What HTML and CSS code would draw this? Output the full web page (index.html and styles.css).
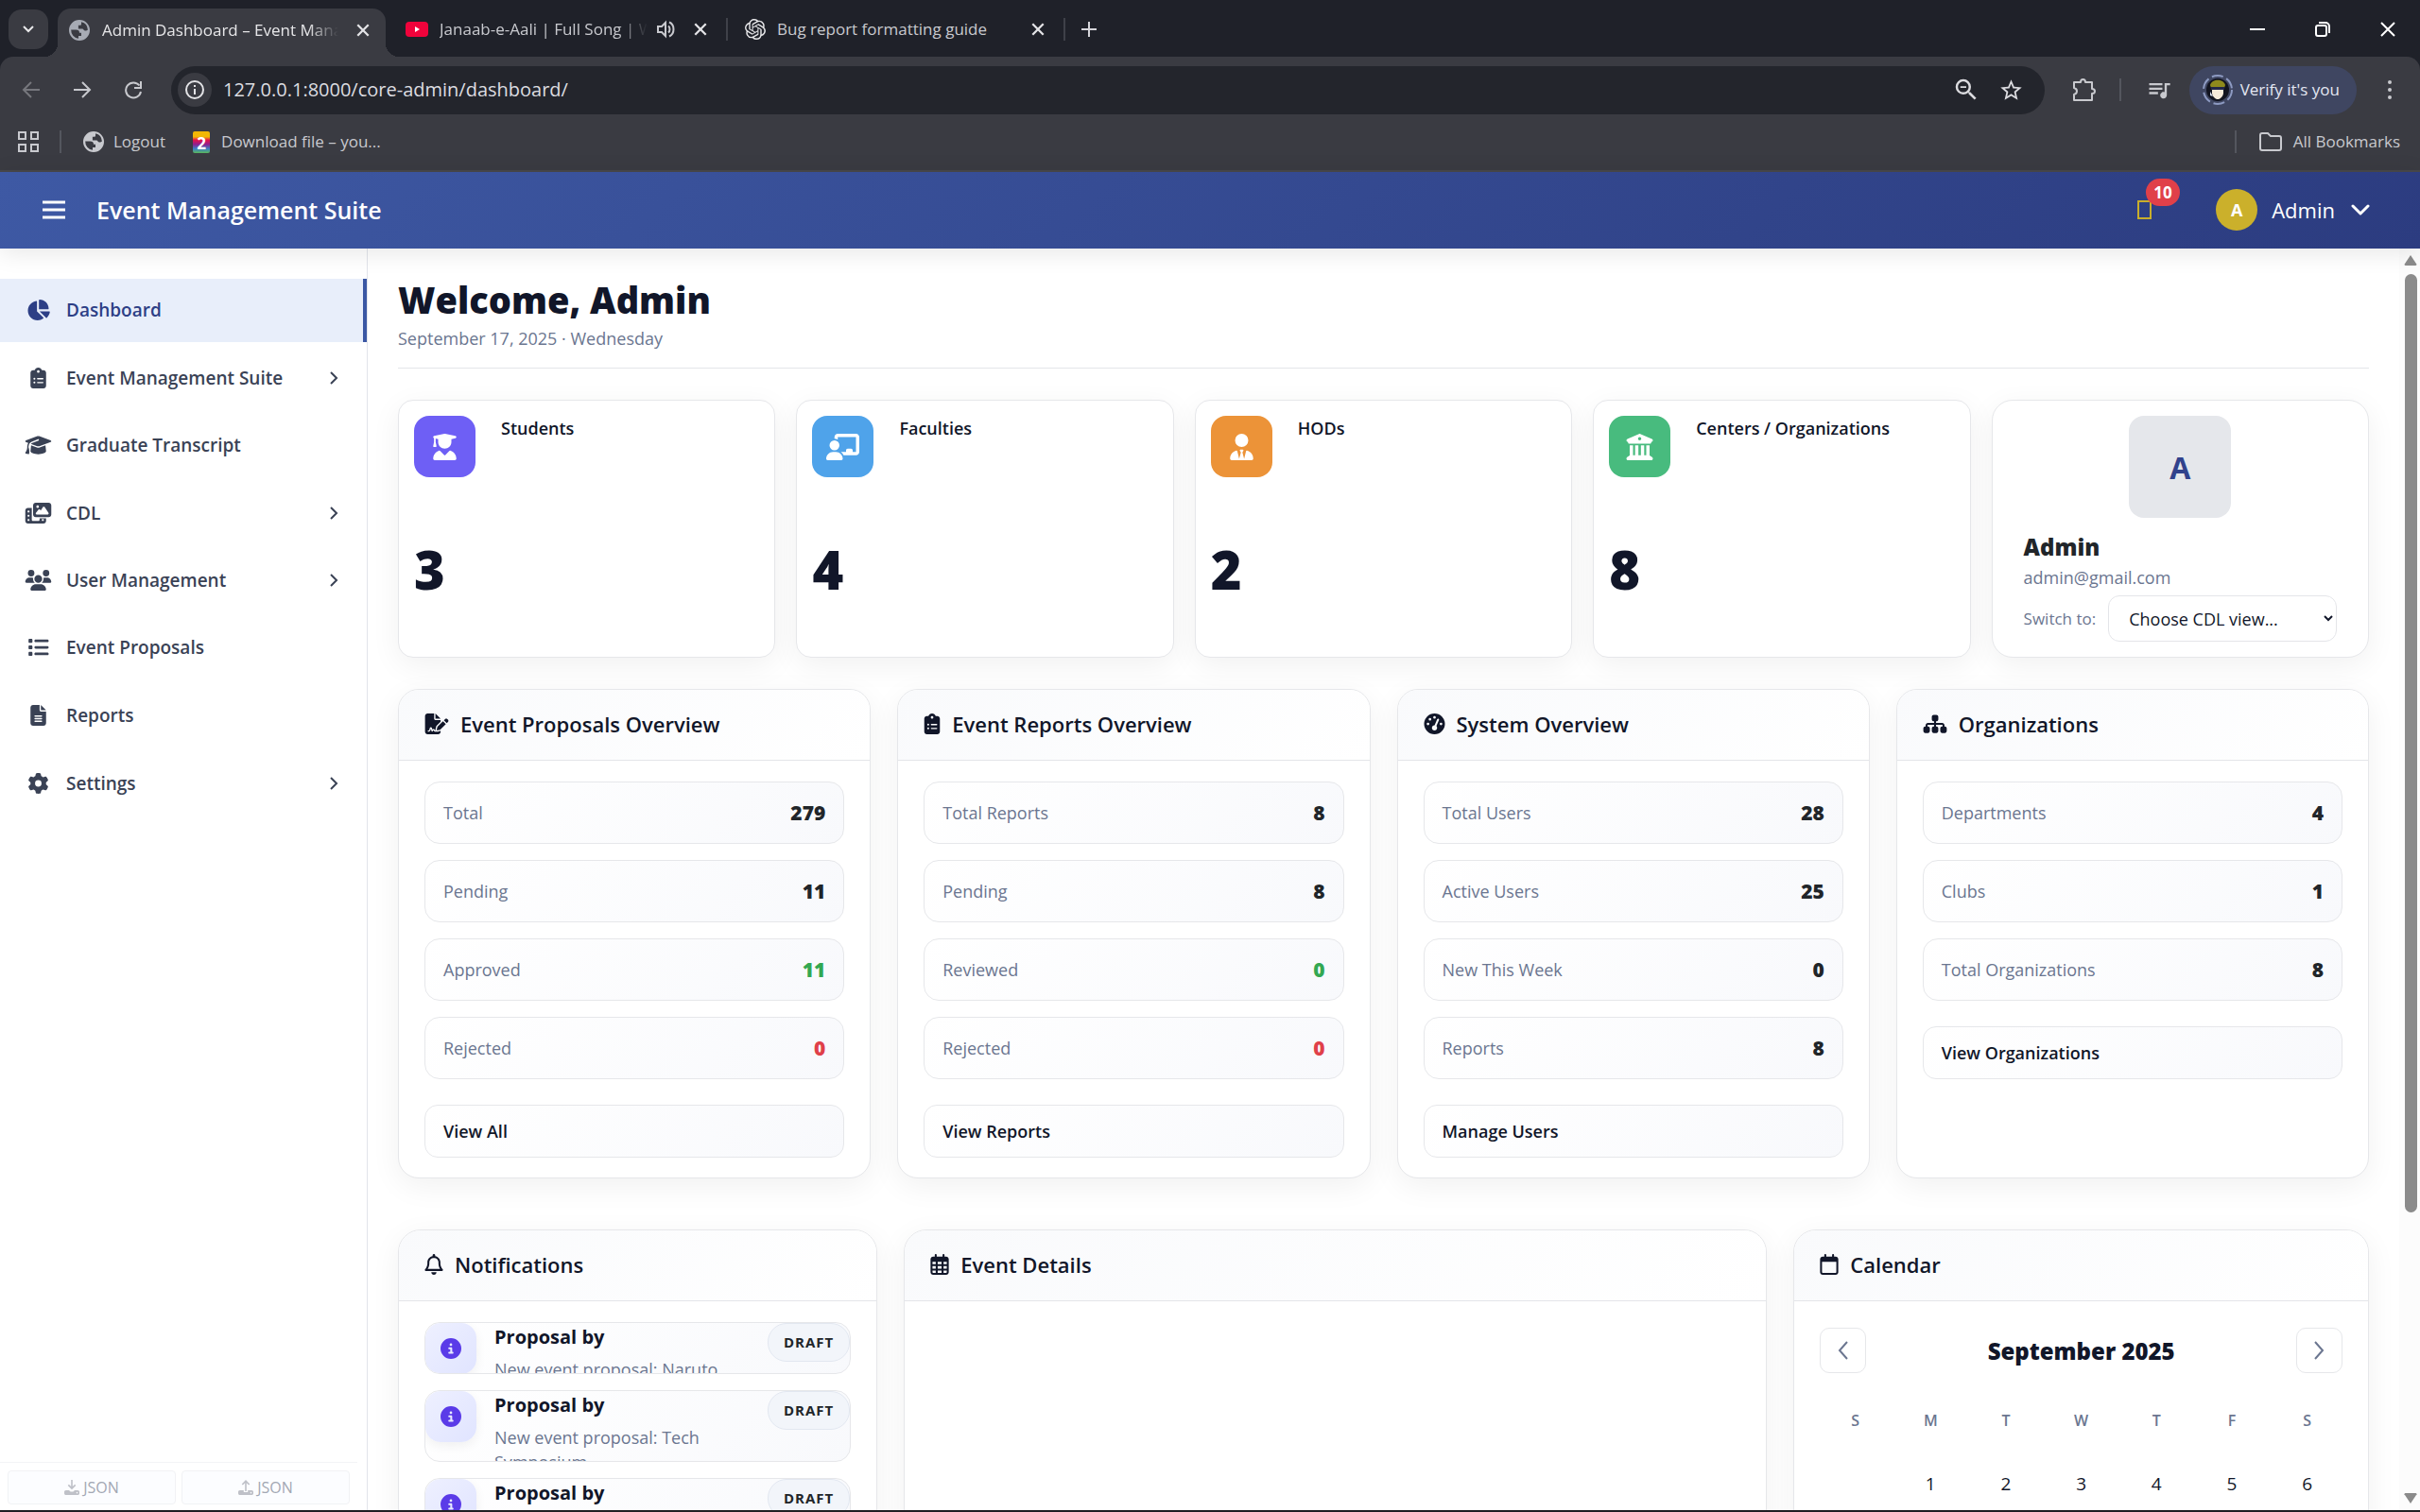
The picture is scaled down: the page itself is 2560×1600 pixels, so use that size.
FILE: index.html
```html
<!DOCTYPE html>
<html lang="en">
<head>
<meta charset="utf-8">
<title>Admin Dashboard – Event Management Suite</title>
<link rel="stylesheet" href="styles.css">
</head>
<body>
<svg class="sprite" aria-hidden="true">
  <symbol id="pie" viewBox="0 0 576 512"><path d="M304 240V16.600c0-9 7-16.600 16-16.600C443.700 0 544 100.300 544 224c0 9-7.600 16-16.600 16H304zM32 272C32 150.700 122.100 50.300 239 34.300c9.200-1.300 17 6.100 17 15.400V288L412.500 444.500c6.700 6.700 6.200 17.700-1.500 23.100C371.800 495.600 323.800 512 272 512C139.500 512 32 404.600 32 272zm526.400 16c9.300 0 16.600 7.800 15.400 17c-7.700 55.900-34.600 105.600-73.900 142.300c-6 5.600-15.400 5.200-21.200-.7L320 288H558.400z"/></symbol>
  <symbol id="clipboard" viewBox="0 0 384 512"><path d="M192 0c-41.800 0-77.400 26.700-90.500 64H64C28.700 64 0 92.700 0 128V448c0 35.300 28.700 64 64 64H320c35.300 0 64-28.700 64-64V128c0-35.300-28.700-64-64-64H282.500C269.400 26.700 233.800 0 192 0zm0 64a32 32 0 1 1 0 64 32 32 0 1 1 0-64zM72 272a24 24 0 1 1 48 0 24 24 0 1 1 -48 0zm104-16H304c8.800 0 16 7.200 16 16s-7.200 16-16 16H176c-8.800 0-16-7.200-16-16s7.200-16 16-16zM72 368a24 24 0 1 1 48 0 24 24 0 1 1 -48 0zm88 0c0-8.800 7.200-16 16-16H304c8.800 0 16 7.200 16 16s-7.200 16-16 16H176c-8.800 0-16-7.200-16-16z"/></symbol>
  <symbol id="gradcap" viewBox="0 0 640 512"><path d="M320 32c-8.100 0-16.100 1.400-23.700 4.100L15.800 137.400C6.300 140.900 0 149.900 0 160s6.300 19.100 15.800 22.600l57.900 20.900C57.300 229.300 48 259.800 48 291.900v28.100c0 28.400-10.800 57.700-22.300 80.800c-6.500 13-13.900 25.800-22.500 37.600C0 442.700-.9 448.300 .9 453.400s6 8.900 11.200 10.200l64 16c4.200 1.100 8.700 .3 12.400-2s6.300-6.100 7.100-10.400c8.600-42.800 4.300-81.200-2.100-108.700C90.300 344.300 86 329.800 80 316.500V291.900c0-30.200 10.200-58.700 27.900-81.500c12.900-15.500 29.600-28 49.200-35.700l157-61.700c8.200-3.200 17.500 .8 20.700 9s-.8 17.500-9 20.700l-157 61.700c-12.400 4.900-23.300 12.400-32.200 21.600l159.600 57.600c7.600 2.700 15.600 4.100 23.700 4.100s16.100-1.400 23.700-4.100L624.200 182.600c9.500-3.400 15.800-12.500 15.800-22.600s-6.300-19.100-15.800-22.600L343.700 36.100C336.100 33.400 328.100 32 320 32zM128 408c0 35.300 86 72 192 72s192-36.700 192-72L496.700 262.600 354.500 314c-11.100 4-22.800 6-34.500 6s-23.500-2-34.500-6L143.300 262.600 128 408z"/></symbol>
  <symbol id="film" viewBox="0 0 640 512"><path d="M256 0H576c35.300 0 64 28.700 64 64V288c0 35.300-28.700 64-64 64H256c-35.300 0-64-28.700-64-64V64c0-35.300 28.700-64 64-64zM476 106.700C471.500 100 464 96 456 96s-15.500 4-20 10.700l-56 84L362.700 169c-4.600-5.700-11.500-9-18.700-9s-14.200 3.300-18.700 9l-64 80c-5.800 7.200-6.900 17.100-2.900 25.400s12.400 13.600 21.600 13.600h80 48H552c8.900 0 17-4.900 21.200-12.700s3.700-17.300-1.200-24.600l-96-144zM336 96a32 32 0 1 0 -64 0 32 32 0 1 0 64 0zM64 128h96V384v32c0 17.700 14.300 32 32 32H320c17.700 0 32-14.300 32-32V384H512v64c0 35.300-28.700 64-64 64H64c-35.300 0-64-28.700-64-64V192c0-35.300 28.700-64 64-64zm8 64c-8.800 0-16 7.200-16 16v16c0 8.800 7.200 16 16 16H88c8.800 0 16-7.200 16-16V208c0-8.800-7.200-16-16-16H72zm0 104c-8.800 0-16 7.200-16 16v16c0 8.800 7.200 16 16 16H88c8.800 0 16-7.200 16-16V312c0-8.800-7.200-16-16-16H72zm0 104c-8.800 0-16 7.200-16 16v16c0 8.800 7.200 16 16 16H88c8.800 0 16-7.200 16-16V416c0-8.800-7.200-16-16-16H72zm336 16v16c0 8.800 7.200 16 16 16h16c8.800 0 16-7.200 16-16V416c0-8.800-7.200-16-16-16H424c-8.800 0-16 7.200-16 16z"/></symbol>
  <symbol id="users" viewBox="0 0 640 512"><path d="M144 0a80 80 0 1 1 0 160A80 80 0 1 1 144 0zM512 0a80 80 0 1 1 0 160A80 80 0 1 1 512 0zM0 298.700C0 239.800 47.800 192 106.700 192h42.700c15.900 0 31 3.500 44.600 9.700c-1.300 7.200-1.900 14.700-1.900 22.300c0 38.200 16.800 72.500 43.300 96c-.2 0-.4 0-.7 0H21.300C9.600 320 0 310.400 0 298.700zM405.300 320c-.2 0-.4 0-.7 0c26.600-23.500 43.300-57.800 43.300-96c0-7.600-.7-15-1.900-22.300c13.600-6.300 28.700-9.700 44.600-9.700h42.700C592.200 192 640 239.800 640 298.700c0 11.800-9.600 21.300-21.300 21.300H405.300zM224 224a96 96 0 1 1 192 0 96 96 0 1 1 -192 0zM128 485.300C128 411.700 187.700 352 261.300 352H378.700C452.300 352 512 411.700 512 485.300c0 14.700-11.900 26.700-26.700 26.700H154.700c-14.700 0-26.700-11.900-26.700-26.700z"/></symbol>
  <symbol id="list" viewBox="0 0 512 512"><path d="M40 48C26.700 48 16 58.700 16 72v48c0 13.300 10.700 24 24 24H88c13.300 0 24-10.700 24-24V72c0-13.300-10.700-24-24-24H40zM192 64c-17.700 0-32 14.300-32 32s14.300 32 32 32H480c17.700 0 32-14.300 32-32s-14.300-32-32-32H192zm0 160c-17.700 0-32 14.300-32 32s14.300 32 32 32H480c17.700 0 32-14.300 32-32s-14.300-32-32-32H192zm0 160c-17.700 0-32 14.300-32 32s14.300 32 32 32H480c17.700 0 32-14.300 32-32s-14.300-32-32-32H192zM16 232v48c0 13.300 10.700 24 24 24H88c13.300 0 24-10.700 24-24V232c0-13.300-10.700-24-24-24H40c-13.300 0-24 10.700-24 24zM40 368c-13.300 0-24 10.700-24 24v48c0 13.300 10.700 24 24 24H88c13.300 0 24-10.700 24-24V392c0-13.300-10.700-24-24-24H40z"/></symbol>
  <symbol id="file" viewBox="0 0 384 512"><path d="M64 0C28.700 0 0 28.700 0 64V448c0 35.300 28.700 64 64 64H320c35.300 0 64-28.700 64-64V160H256c-17.700 0-32-14.300-32-32V0H64zM256 0V128H384L256 0zM112 256H272c8.800 0 16 7.200 16 16s-7.200 16-16 16H112c-8.800 0-16-7.200-16-16s7.200-16 16-16zm0 64H272c8.800 0 16 7.200 16 16s-7.200 16-16 16H112c-8.800 0-16-7.200-16-16s7.200-16 16-16zm0 64H272c8.800 0 16 7.200 16 16s-7.200 16-16 16H112c-8.800 0-16-7.200-16-16s7.200-16 16-16z"/></symbol>
  <symbol id="gear" viewBox="0 0 512 512"><path d="M495.900 166.600c3.200 8.700 .5 18.400-6.400 24.600l-43.300 39.400c1.100 8.300 1.700 16.800 1.700 25.400s-.6 17.100-1.700 25.400l43.300 39.400c6.900 6.200 9.600 15.900 6.400 24.600c-4.400 11.900-9.700 23.300-15.800 34.300l-4.700 8.100c-6.600 11-14 21.400-22.100 31.200c-5.900 7.200-15.700 9.600-24.500 6.800l-55.700-17.700c-13.400 10.300-28.200 18.900-44 25.400l-12.500 57.100c-2 9.100-9 16.300-18.200 17.800c-13.800 2.300-28 3.500-42.500 3.500s-28.700-1.200-42.500-3.500c-9.200-1.500-16.200-8.700-18.200-17.800l-12.500-57.100c-15.800-6.500-30.600-15.100-44-25.400L83.100 425.900c-8.800 2.800-18.600 .3-24.500-6.800c-8.100-9.800-15.500-20.200-22.100-31.200l-4.700-8.100c-6.100-11-11.400-22.400-15.800-34.300c-3.200-8.700-.5-18.400 6.400-24.600l43.300-39.400C64.600 273.100 64 264.600 64 256s.6-17.100 1.700-25.400L22.400 191.200c-6.900-6.200-9.600-15.900-6.400-24.600c4.400-11.900 9.700-23.300 15.800-34.300l4.700-8.100c6.600-11 14-21.400 22.100-31.200c5.900-7.200 15.700-9.600 24.500-6.800l55.700 17.700c13.400-10.300 28.200-18.900 44-25.400l12.500-57.100c2-9.100 9-16.300 18.200-17.800C227.300 1.200 241.500 0 256 0s28.700 1.200 42.500 3.500c9.200 1.500 16.200 8.700 18.200 17.800l12.500 57.100c15.800 6.500 30.600 15.100 44 25.400l55.700-17.700c8.800-2.800 18.600-.3 24.500 6.800c8.100 9.800 15.500 20.200 22.100 31.200l4.700 8.100c6.100 11 11.400 22.400 15.800 34.300zM256 336a80 80 0 1 0 0-160 80 80 0 1 0 0 160z"/></symbol>
  <symbol id="student" viewBox="0 0 448 512"><path d="M219.300 .5c3.100-.6 6.300-.6 9.400 0l200 40C439.900 42.700 448 52.600 448 64s-8.100 21.300-19.300 23.500L352 102.900V160c0 70.700-57.300 128-128 128s-128-57.300-128-128V102.900L48 93.300v65.100l15.700 78.400c.9 4.700-.3 9.600-3.300 13.300s-7.600 5.900-12.400 5.900H16c-4.800 0-9.300-2.100-12.400-5.900s-4.300-8.600-3.300-13.300L16 158.400V86.600C6.500 83.300 0 74.300 0 64C0 52.600 8.100 42.700 19.300 40.500l200-40zM111.900 327.700c10.500-3.400 21.800 .4 29.400 8.500l71 75.500c6.300 6.700 17 6.700 23.300 0l71-75.500c7.600-8.100 18.900-11.900 29.400-8.500C401 348.600 448 409.400 448 481.300c0 17-13.800 30.700-30.700 30.700H30.700C13.800 512 0 498.200 0 481.300c0-71.900 47-132.700 111.900-153.600z"/></symbol>
  <symbol id="teacher" viewBox="0 0 640 512"><path d="M160 64c0-35.300 28.700-64 64-64H576c35.300 0 64 28.700 64 64V352c0 35.300-28.700 64-64 64H336.800c-11.800-25.500-29.900-47.500-52.400-64H384V320c0-17.700 14.300-32 32-32h64c17.700 0 32 14.300 32 32v32h64V64L224 64v49.100C205.200 102.200 183.300 96 160 96V64zm0 64a96 96 0 1 1 0 192 96 96 0 1 1 0-192zM133.300 352h53.300C260.300 352 320 411.700 320 485.300c0 14.700-11.900 26.700-26.700 26.700H26.700C11.900 512 0 500.100 0 485.300C0 411.700 59.700 352 133.300 352z"/></symbol>
  <symbol id="tie" viewBox="0 0 448 512"><path d="M224 256A128 128 0 1 0 224 0a128 128 0 1 0 0 256zM209.100 359.200l-18.600-31c-6.400-10.700 1.300-24.200 13.700-24.200H224h19.700c12.400 0 20.100 13.600 13.700 24.200l-18.600 31 33.400 123.900 36-146.900c2-8.100 9.800-13.400 17.900-11.300c70.100 17.600 121.900 81 121.900 156.400c0 17-13.800 30.700-30.700 30.700H285.500c-2.100 0-4-.4-5.800-1.100l.3 1.100H168l.3-1.100c-1.800 .7-3.800 1.100-5.800 1.100H30.700C13.800 512 0 498.200 0 481.300c0-75.500 51.900-138.900 121.900-156.400c8.100-2 15.900 3.300 17.900 11.300l36 146.900 33.400-123.900z"/></symbol>
  <symbol id="columns" viewBox="0 0 512 512"><path d="M243.400 2.600l-224 96c-14 6-21.800 21-18.700 35.800S16.800 160 32 160v8c0 13.300 10.700 24 24 24H456c13.300 0 24-10.700 24-24v-8c15.200 0 28.300-10.700 31.300-25.600s-4.800-29.900-18.700-35.800l-224-96c-8-3.400-17.200-3.400-25.200 0zM128 224H64V420.300c-.6 .3-1.200 .7-1.800 1.100l-48 32c-11.700 7.800-17 22.400-12.900 35.900S17.900 512 32 512H480c14.100 0 26.500-9.200 30.600-22.700s-1.100-28.100-12.900-35.900l-48-32c-.6-.4-1.200-.7-1.800-1.100V224H384V416H344V224H280V416H232V224H168V416H128V224zM256 64a32 32 0 1 1 0 64 32 32 0 1 1 0-64z"/></symbol>
  <symbol id="sign" viewBox="0 0 576 512"><path d="M64 0C28.700 0 0 28.700 0 64V448c0 35.300 28.700 64 64 64H320c35.300 0 64-28.700 64-64V428.700c-2.700 1.100-5.400 2-8.200 2.700l-60.100 15c-3 .7-6 1.200-9 1.400c-.9 .1-1.800 .2-2.700 .2H240c-6.100 0-11.600-3.400-14.300-8.800l-8.800-17.700c-1.700-3.400-5.100-5.500-8.800-5.500s-7.200 2.100-8.800 5.500l-8.800 17.700c-2.900 5.900-9.200 9.400-15.700 8.800s-12.100-5.100-13.900-11.300L144 381l-9.800 32.800c-6.100 20.300-24.800 34.200-46 34.200H80c-8.800 0-16-7.200-16-16s7.200-16 16-16h8.200c7.100 0 13.300-4.600 15.300-11.400l14.900-49.500c3.400-11.300 13.800-19.100 25.600-19.100s22.200 7.700 25.600 19.100l11.600 38.600c7.400-6.200 16.800-9.700 26.800-9.700c15.900 0 30.400 9 37.500 23.200l4.400 8.800h8.900c-3.100-8.800-3.700-18.400-1.400-27.800l15-60.100c2.800-11.300 8.600-21.500 16.800-29.700L384 203.600V160H256c-17.700 0-32-14.300-32-32V0H64zM256 0V128H384L256 0zM549.800 139.700c-15.600-15.600-40.900-15.600-56.600 0l-29.400 29.400 71 71 29.400-29.400c15.600-15.600 15.600-40.900 0-56.600l-14.400-14.400zM311.900 321c-4.100 4.100-7 9.200-8.400 14.900l-15 60.100c-1.400 5.500 .2 11.200 4.200 15.200s9.700 5.600 15.200 4.200l60.100-15c5.600-1.400 10.800-4.300 14.900-8.400L512.100 262.700l-71-71L311.900 321z"/></symbol>
  <symbol id="gauge" viewBox="0 0 512 512"><path d="M0 256a256 256 0 1 1 512 0A256 256 0 1 1 0 256zM288 96a32 32 0 1 0 -64 0 32 32 0 1 0 64 0zM256 416c35.300 0 64-28.700 64-64c0-17.400-6.900-33.100-18.100-44.600L366 161.700c5.300-12.100-.2-26.300-12.300-31.600s-26.300 .2-31.600 12.300L257.900 288c-.6 0-1.300 0-1.900 0c-35.300 0-64 28.700-64 64s28.700 64 64 64zM176 144a32 32 0 1 0 -64 0 32 32 0 1 0 64 0zM96 288a32 32 0 1 0 0-64 32 32 0 1 0 0 64zm352-32a32 32 0 1 0 -64 0 32 32 0 1 0 64 0z"/></symbol>
  <symbol id="sitemap" viewBox="0 0 576 512"><path d="M208 80c0-26.500 21.500-48 48-48h64c26.500 0 48 21.500 48 48v64c0 26.500-21.500 48-48 48h-8v40H464c30.900 0 56 25.100 56 56v32h8c26.500 0 48 21.500 48 48v64c0 26.500-21.500 48-48 48H464c-26.500 0-48-21.500-48-48V368c0-26.500 21.500-48 48-48h8V288c0-4.400-3.600-8-8-8H312v40h8c26.500 0 48 21.500 48 48v64c0 26.500-21.500 48-48 48H256c-26.500 0-48-21.500-48-48V368c0-26.500 21.500-48 48-48h8V280H112c-4.400 0-8 3.600-8 8v32h8c26.500 0 48 21.500 48 48v64c0 26.500-21.500 48-48 48H48c-26.500 0-48-21.500-48-48V368c0-26.500 21.500-48 48-48h8V288c0-30.900 25.100-56 56-56H264V192h-8c-26.500 0-48-21.500-48-48V80z"/></symbol>
  <symbol id="bell" viewBox="0 0 448 512"><path d="M224 0c-17.700 0-32 14.300-32 32V49.900C119.500 61.400 64 124.200 64 200v33.400c0 45.400-15.500 89.500-43.800 124.900L5.300 377c-5.800 7.200-6.900 17.100-2.900 25.400S14.800 416 24 416H424c9.200 0 17.600-5.300 21.600-13.600s2.900-18.200-2.900-25.400l-14.900-18.600C399.500 322.900 384 278.800 384 233.400V200c0-75.800-55.500-138.600-128-150.100V32c0-17.700-14.300-32-32-32zm0 96h8c57.400 0 104 46.600 104 104v33.400c0 47.900 13.900 94.600 39.700 134.600H72.300C98.100 328 112 281.300 112 233.400V200c0-57.400 46.600-104 104-104h8zm64 352H224 160c0 17 6.700 33.300 18.700 45.300s28.300 18.700 45.300 18.700s33.300-6.700 45.300-18.700s18.700-28.300 18.700-45.300z"/></symbol>
  <symbol id="calgrid" viewBox="0 0 448 512"><path fill-rule="evenodd" d="M128 0c13 0 24 11 24 24V64H296V24c0-13 11-24 24-24s24 11 24 24V64h40c35 0 64 29 64 64V448c0 35-29 64-64 64H64c-35 0-64-29-64-64V128C0 93 29 64 64 64h40V24c0-13 11-24 24-24zM48 192v56h80v-56zm128 0v56h96v-56zm144 0v56h80v-56zM48 296v64h80v-64zm128 0v64h96v-64zm144 0v64h80v-64zM48 408v40c0 9 7 16 16 16h64v-56zm128 0v56h96v-56zm144 0v56h64c9 0 16-7 16-16v-40z"/></symbol>
  <symbol id="cal" viewBox="0 0 448 512"><path fill-rule="evenodd" d="M128 0c13 0 24 11 24 24V64H296V24c0-13 11-24 24-24s24 11 24 24V64h40c35 0 64 29 64 64V448c0 35-29 64-64 64H64c-35 0-64-29-64-64V128C0 93 29 64 64 64h40V24c0-13 11-24 24-24zM48 192V448c0 9 7 16 16 16H384c9 0 16-7 16-16V192z"/></symbol>
  <symbol id="info" viewBox="0 0 512 512"><path d="M256 512A256 256 0 1 0 256 0a256 256 0 1 0 0 512zM216 336h24V272H216c-13.300 0-24-10.700-24-24s10.700-24 24-24h48c13.300 0 24 10.700 24 24v88h8c13.300 0 24 10.700 24 24s-10.700 24-24 24H216c-13.300 0-24-10.700-24-24s10.700-24 24-24zm40-208a32 32 0 1 1 0 64 32 32 0 1 1 0-64z"/></symbol>
  <symbol id="down" viewBox="0 0 16 16"><path d="M7.200 0h1.600v7l2.300-2.300 1.200 1.200L8 10.200 3.700 5.900l1.200-1.200L7.200 7zM1.800 11H5l1.600 1.500h2.800L11 11h3.200c1 0 1.800.8 1.800 1.800v1.400c0 1-.8 1.800-1.800 1.800H1.800C.8 16 0 15.200 0 14.200v-1.400C0 11.800.8 11 1.800 11zm11.700 1.800a.8.8 0 1 0 0 1.600.8.8 0 0 0 0-1.600z"/></symbol>
  <symbol id="up" viewBox="0 0 16 16"><path d="M7.200 12V3.300L4.900 5.600 3.700 4.400 8 0l4.300 4.400-1.200 1.200-2.300-2.300V12zM1.800 11h4v2h4.400v-2h4c1 0 1.800.8 1.800 1.800v1.400c0 1-.8 1.800-1.800 1.800H1.800C.8 16 0 15.200 0 14.200v-1.400C0 11.800.8 11 1.800 11zm11.700 1.800a.8.8 0 1 0 0 1.600.8.8 0 0 0 0-1.600z"/></symbol>
  <symbol id="right" viewBox="0 0 10 14"><path d="M2 1l6 6-6 6" fill="none" stroke="currentColor" stroke-width="2"/></symbol>
  <symbol id="x" viewBox="0 0 14 14"><path d="M2 2l10 10M12 2L2 12" fill="none" stroke="currentColor" stroke-width="2"/></symbol>
  <symbol id="globe" viewBox="0 0 24 24"><path fill-rule="evenodd" d="M12 1a11 11 0 1 0 0 22 11 11 0 0 0 0-22zM3.200 11.500h5.300c2.300 0 3.500 1.200 3.500 3.200h2v3.300h-3v2.800A9 9 0 0 1 3.200 11.500zM14 3.300a9 9 0 0 1 6.900 8.200c-1.200 1.500-3 1.300-4.200.2l-1.200-1.300h-4.600V6.700H13c1 0 1-.9 1-1.500z"/></symbol>
  <symbol id="gpt" viewBox="0 0 24 24"><path d="M22.282 9.821a5.985 5.985 0 0 0-.516-4.911 6.046 6.046 0 0 0-6.510-2.900A6.065 6.065 0 0 0 4.981 4.182a5.985 5.985 0 0 0-3.998 2.900 6.046 6.046 0 0 0 .743 7.097 5.980 5.980 0 0 0 .511 4.911 6.051 6.051 0 0 0 6.515 2.900A5.985 5.985 0 0 0 13.260 24a6.056 6.056 0 0 0 5.772-4.206 5.989 5.989 0 0 0 3.998-2.900 6.056 6.056 0 0 0-.748-7.073zm-9.022 12.608a4.476 4.476 0 0 1-2.876-1.041l.142-.080 4.778-2.758a.795.795 0 0 0 .393-.681v-6.737l2.020 1.169a.071.071 0 0 1 .038.052v5.583a4.504 4.504 0 0 1-4.495 4.494zm-9.661-4.125a4.471 4.471 0 0 1-.535-3.014l.142.085 4.783 2.758a.771.771 0 0 0 .781 0l5.843-3.369v2.332a.080.080 0 0 1-.033.062L9.740 19.950a4.499 4.499 0 0 1-6.141-1.646zM2.341 7.896a4.485 4.485 0 0 1 2.366-1.973V11.600a.766.766 0 0 0 .388.677l5.814 3.354-2.020 1.169a.076.076 0 0 1-.071 0l-4.830-2.787A4.504 4.504 0 0 1 2.341 7.872zm16.596 3.856L13.104 8.364 15.119 7.200a.076.076 0 0 1 .071 0l4.830 2.791a4.494 4.494 0 0 1-.677 8.104v-5.677a.790.790 0 0 0-.407-.667zm2.011-3.023l-.142-.085-4.774-2.782a.776.776 0 0 0-.785 0L9.409 9.230V6.897a.066.066 0 0 1 .028-.062l4.830-2.787a4.499 4.499 0 0 1 6.680 4.660zM8.307 12.863l-2.020-1.164a.080.080 0 0 1-.038-.057V6.074a4.499 4.499 0 0 1 7.376-3.454l-.142.081L8.704 5.459a.795.795 0 0 0-.393.681zm1.098-2.365l2.602-1.500 2.607 1.500v2.999l-2.597 1.500-2.607-1.500Z"/></symbol>
</svg>

<div class="browser">
  <div class="tabs">
    <button class="tab-search" aria-label="Search tabs"><svg width="14" height="10" viewBox="0 0 14 10"><path d="M2 2l5 5 5-5" fill="none" stroke="#e8e8ea" stroke-width="2"/></svg></button>
    <div class="tab tab-active">
      <svg class="fav fav-globe"><use href="#globe"/></svg>
      <span class="tab-title">Admin Dashboard – Event Mana</span>
      <button class="tab-close" aria-label="Close tab"><svg width="16" height="16"><use href="#x"/></svg></button>
    </div>
    <div class="tab tab-song">
      <svg class="fav" viewBox="0 0 24 24"><rect y="4" width="24" height="16" rx="4" fill="#f0033b"/><path d="M10 9l5 3-5 3z" fill="#fff"/></svg>
      <span class="tab-title">Janaab-e-Aali | Full Song | W</span>
      <svg class="sound" viewBox="0 0 20 20"><path d="M1 7h4l4-4v14l-4-4H1z" fill="none" stroke="currentColor" stroke-width="2"/><path d="M12 6.500c2 1.500 2 5.500 0 7M13 2.500c6 2.500 6 12.500 0 15" fill="none" stroke="currentColor" stroke-width="2"/></svg>
      <button class="tab-close" aria-label="Close tab"><svg width="16" height="16"><use href="#x"/></svg></button>
    </div>
    <i class="tab-rule"></i>
    <div class="tab tab-chat">
      <svg class="fav fav-gpt"><use href="#gpt"/></svg>
      <span class="tab-title tab-whole">Bug report formatting guide</span>
      <button class="tab-close" aria-label="Close tab"><svg width="16" height="16"><use href="#x"/></svg></button>
    </div>
    <i class="tab-rule"></i>
    <button class="new-tab" aria-label="New tab"><svg width="18" height="18" viewBox="0 0 18 18"><path d="M9 1v16M1 9h16" stroke="#d5d5da" stroke-width="2"/></svg></button>
    <div class="window-buttons">
      <button aria-label="Minimize"><svg width="16" height="16" viewBox="0 0 16 16"><path d="M0 8h16" stroke="#fff" stroke-width="2"/></svg></button>
      <button aria-label="Restore"><svg width="16" height="16" viewBox="0 0 16 16"><g fill="none" stroke="#fff" stroke-width="2"><rect x="1" y="4" width="11" height="11" rx="2"/><path d="M4 1h7a4 4 0 0 1 4 4v7"/></g></svg></button>
      <button aria-label="Close"><svg width="16" height="16" viewBox="0 0 16 16"><path d="M1 1l14 14M15 1L1 15" stroke="#fff" stroke-width="2"/></svg></button>
    </div>
  </div>
  <div class="toolbar">
    <button class="nav-button nav-off" aria-label="Back"><svg width="20" height="20" viewBox="0 0 20 20"><path d="M19 10H2M10 2l-8 8 8 8" fill="none" stroke="currentColor" stroke-width="2"/></svg></button>
    <button class="nav-button" aria-label="Forward"><svg width="20" height="20" viewBox="0 0 20 20"><path d="M1 10h17M10 2l8 8-8 8" fill="none" stroke="currentColor" stroke-width="2"/></svg></button>
    <button class="nav-button" aria-label="Reload"><svg width="20" height="20" viewBox="0 0 20 20"><path d="M18 12A8 8 0 1 1 16.500 5.500M18 1v7h-7" fill="none" stroke="currentColor" stroke-width="2"/></svg></button>
    <div class="omnibox">
      <button class="site-info" aria-label="View site information"><svg width="20" height="20" viewBox="0 0 20 20"><circle cx="10" cy="10" r="9" fill="none" stroke="#e3e3e6" stroke-width="2"/><path d="M10 9v6M10 5v2" stroke="#e3e3e6" stroke-width="2"/></svg></button>
      <input class="url" type="text" aria-label="Address" value="127.0.0.1:8000/core-admin/dashboard/">
      <button class="omni-button" aria-label="Zoom"><svg width="30" height="30" viewBox="0 0 24 24"><path d="M15.500 14h-.79l-.28-.27A6.471 6.471 0 0 0 16 9.500 6.500 6.500 0 1 0 9.500 16c1.610 0 3.090-.59 4.230-1.570l.27.28v.79l5 4.990L20.490 19l-4.990-5zm-6 0C7.010 14 5 11.990 5 9.500S7.010 5 9.500 5 14 7.010 14 9.500 11.990 14 9.500 14zM7 9h5v1.300H7z"/></svg></button>
      <button class="omni-button" aria-label="Bookmark this tab"><svg width="27" height="27" viewBox="0 0 24 24"><path d="M22 9.240l-7.190-.62L12 2 9.190 8.630 2 9.240l5.460 4.730L5.820 21 12 17.270 18.180 21l-1.630-7.030L22 9.240zM12 15.400l-3.760 2.270 1-4.280-3.320-2.880 4.380-.38L12 6.100l1.710 4.040 4.380.38-3.320 2.880 1 4.280L12 15.400z"/></svg></button>
    </div>
    <button class="nav-button ext" aria-label="Extensions"><svg width="26" height="26" viewBox="0 0 26 26"><path d="M2 5h7c0-4 5-4 5 0h7v7c4 0 4 5 0 5v7H2v-6c4-1 4-6 0-7z" fill="none" stroke="currentColor" stroke-width="2" stroke-linejoin="round"/></svg></button>
    <i class="bar-rule"></i>
    <button class="nav-button music" aria-label="Media controls"><svg width="28" height="28" viewBox="0 0 24 24"><path d="M15 6H3v2h12V6zm0 4H3v2h12v-2zM3 16h8v-2H3v2zM17 6v8.180c-.31-.11-.65-.18-1-.18-1.660 0-3 1.340-3 3s1.340 3 3 3 3-1.340 3-3V8h3V6h-5z"/></svg></button>
    <button class="verify">
      <svg width="32" height="32" viewBox="0 0 32 32"><circle cx="16" cy="16" r="15" fill="none" stroke="#8d9ac2" stroke-width="2" stroke-dasharray="12 4"/><circle cx="16" cy="16" r="12" fill="#12141f"/><path d="M8 11c2-7 14-7 16 0l-1 3H9z" fill="#8e8a1d"/><path d="M10 16h12v4c-1 4-4 6-6 6s-5-2-6-6z" fill="#f5ead9"/><path d="M8 18l3 5-3-1z" fill="#d9e2f4"/><path d="M9 13h14v3H9z" fill="#23284a"/></svg>
      Verify it's you
    </button>
    <button class="nav-button dots" aria-label="Menu"><svg width="6" height="22" viewBox="0 0 6 22"><circle cx="3" cy="3" r="2"/><circle cx="3" cy="11" r="2"/><circle cx="3" cy="19" r="2"/></svg></button>
  </div>
  <div class="bookmarks">
    <button class="nav-button" aria-label="Apps"><svg width="22" height="22" viewBox="0 0 22 22"><path d="M1 1h7v7H1zM14 1h7v7h-7zM1 14h7v7H1zM14 14h7v7h-7z" fill="none" stroke="currentColor" stroke-width="2"/></svg></button>
    <i class="bar-rule"></i>
    <a class="mark" href="#"><svg width="24" height="24"><use href="#globe"/></svg>Logout</a>
    <a class="mark mark-two" href="#"><span class="two">2</span>Download file – you...</a>
    <i class="bar-rule all-rule"></i>
    <a class="mark mark-all" href="#"><svg width="24" height="20" viewBox="0 0 24 20"><path d="M1 3q0-2 2-2h6l3 3h9q2 0 2 2v11q0 2-2 2H3q-2 0-2-2z" fill="none" stroke="#c8c9ce" stroke-width="2"/></svg>All Bookmarks</a>
  </div>
</div>

<header class="topbar">
  <button class="burger" aria-label="Toggle menu"><svg width="24" height="20" viewBox="0 0 24 20"><path d="M0 2h24M0 10h24M0 18h24" stroke="#fff" stroke-width="3"/></svg></button>
  <h1 class="brand">Event Management Suite</h1>
  <button class="alerts" aria-label="Notifications"><i class="alert-glyph"></i><span class="alert-count">10</span></button>
  <button class="account"><span class="account-badge">A</span>Admin<svg width="20" height="14" viewBox="0 0 20 14"><path d="M2 3l8 8 8-8" fill="none" stroke="#fff" stroke-width="3" stroke-linecap="round" stroke-linejoin="round"/></svg></button>
</header>

<div class="shell">
  <aside class="sidebar">
    <nav class="menu">
      <a class="menu-item menu-current" href="#"><svg class="menu-icon"><use href="#pie"/></svg>Dashboard</a>
      <button class="menu-item menu-group"><svg class="menu-icon"><use href="#clipboard"/></svg>Event Management Suite<svg class="menu-more"><use href="#right"/></svg></button>
      <a class="menu-item" href="#"><svg class="menu-icon"><use href="#gradcap"/></svg>Graduate Transcript</a>
      <button class="menu-item menu-group"><svg class="menu-icon"><use href="#film"/></svg>CDL<svg class="menu-more"><use href="#right"/></svg></button>
      <button class="menu-item menu-group"><svg class="menu-icon"><use href="#users"/></svg>User Management<svg class="menu-more"><use href="#right"/></svg></button>
      <a class="menu-item" href="#"><svg class="menu-icon"><use href="#list"/></svg>Event Proposals</a>
      <a class="menu-item" href="#"><svg class="menu-icon"><use href="#file"/></svg>Reports</a>
      <button class="menu-item menu-group"><svg class="menu-icon"><use href="#gear"/></svg>Settings<svg class="menu-more"><use href="#right"/></svg></button>
    </nav>
    <div class="json-tools">
      <button class="json-button"><svg width="16" height="16"><use href="#down"/></svg>JSON</button>
      <button class="json-button"><svg width="16" height="16"><use href="#up"/></svg>JSON</button>
    </div>
  </aside>

  <main class="main">
    <div class="welcome">
      <h2 class="welcome-title">Welcome, Admin</h2>
      <p class="welcome-date">September 17, 2025 · Wednesday</p>
    </div>

    <section class="stats">
      <article class="card stat"><div class="stat-head"><span class="stat-icon violet"><svg><use href="#student"/></svg></span><h3>Students</h3></div><p class="stat-number">3</p></article>
      <article class="card stat"><div class="stat-head"><span class="stat-icon blue"><svg><use href="#teacher"/></svg></span><h3>Faculties</h3></div><p class="stat-number">4</p></article>
      <article class="card stat"><div class="stat-head"><span class="stat-icon orange"><svg><use href="#tie"/></svg></span><h3>HODs</h3></div><p class="stat-number">2</p></article>
      <article class="card stat"><div class="stat-head"><span class="stat-icon green"><svg><use href="#columns"/></svg></span><h3>Centers / Organizations</h3></div><p class="stat-number">8</p></article>
      <article class="card profile">
        <div class="profile-avatar">A</div>
        <h3 class="profile-name">Admin</h3>
        <p class="profile-mail">admin@gmail.com</p>
        <div class="profile-switch">
          <label for="view">Switch to:</label>
          <select id="view"><option>Choose CDL view...</option></select>
        </div>
      </article>
    </section>

    <section class="overviews">
      <article class="card">
        <h3 class="card-head"><svg class="w-sign"><use href="#sign"/></svg>Event Proposals Overview</h3>
        <div class="card-body">
          <dl class="figures">
            <div class="figure"><dt>Total</dt><dd>279</dd></div>
            <div class="figure"><dt>Pending</dt><dd>11</dd></div>
            <div class="figure"><dt>Approved</dt><dd class="good">11</dd></div>
            <div class="figure"><dt>Rejected</dt><dd class="bad">0</dd></div>
          </dl>
          <a class="view-link" href="#">View All</a>
        </div>
      </article>
      <article class="card">
        <h3 class="card-head"><svg class="w-narrow"><use href="#clipboard"/></svg>Event Reports Overview</h3>
        <div class="card-body">
          <dl class="figures">
            <div class="figure"><dt>Total Reports</dt><dd>8</dd></div>
            <div class="figure"><dt>Pending</dt><dd>8</dd></div>
            <div class="figure"><dt>Reviewed</dt><dd class="good">0</dd></div>
            <div class="figure"><dt>Rejected</dt><dd class="bad">0</dd></div>
          </dl>
          <a class="view-link" href="#">View Reports</a>
        </div>
      </article>
      <article class="card">
        <h3 class="card-head"><svg class="w-square"><use href="#gauge"/></svg>System Overview</h3>
        <div class="card-body">
          <dl class="figures">
            <div class="figure"><dt>Total Users</dt><dd>28</dd></div>
            <div class="figure"><dt>Active Users</dt><dd>25</dd></div>
            <div class="figure"><dt>New This Week</dt><dd>0</dd></div>
            <div class="figure"><dt>Reports</dt><dd>8</dd></div>
          </dl>
          <a class="view-link" href="#">Manage Users</a>
        </div>
      </article>
      <article class="card">
        <h3 class="card-head"><svg class="w-sign"><use href="#sitemap"/></svg>Organizations</h3>
        <div class="card-body">
          <dl class="figures">
            <div class="figure"><dt>Departments</dt><dd>4</dd></div>
            <div class="figure"><dt>Clubs</dt><dd>1</dd></div>
            <div class="figure"><dt>Total Organizations</dt><dd>8</dd></div>
          </dl>
          <a class="view-link" href="#">View Organizations</a>
        </div>
      </article>
    </section>

    <section class="panels">
      <article class="card">
        <h3 class="card-head"><svg class="w-cal"><use href="#bell"/></svg>Notifications</h3>
        <div class="card-body notices">
          <div class="notice notice-short"><span class="notice-icon"><svg><use href="#info"/></svg></span><div class="notice-text"><h4>Proposal by</h4><p>New event proposal: Naruto</p></div><span class="notice-tag">DRAFT</span></div>
          <div class="notice"><span class="notice-icon"><svg><use href="#info"/></svg></span><div class="notice-text"><h4>Proposal by</h4><p>New event proposal: Tech Symposium</p></div><span class="notice-tag">DRAFT</span></div>
          <div class="notice"><span class="notice-icon"><svg><use href="#info"/></svg></span><div class="notice-text"><h4>Proposal by</h4></div><span class="notice-tag">DRAFT</span></div>
        </div>
      </article>
      <article class="card">
        <h3 class="card-head"><svg class="w-cal"><use href="#calgrid"/></svg>Event Details</h3>
      </article>
      <article class="card">
        <h3 class="card-head"><svg class="w-cal"><use href="#cal"/></svg>Calendar</h3>
        <div class="card-body calendar">
          <div class="month">
            <button class="month-button" aria-label="Previous month"><svg width="13" height="20" viewBox="0 0 13 20"><path d="M11 1l-8 9 8 9" fill="none" stroke="currentColor" stroke-width="2"/></svg></button>
            <h4>September 2025</h4>
            <button class="month-button" aria-label="Next month"><svg width="13" height="20" viewBox="0 0 13 20"><path d="M2 1l8 9-8 9" fill="none" stroke="currentColor" stroke-width="2"/></svg></button>
          </div>
          <table class="days">
            <thead><tr><th>S</th><th>M</th><th>T</th><th>W</th><th>T</th><th>F</th><th>S</th></tr></thead>
            <tbody><tr><td></td><td>1</td><td>2</td><td>3</td><td>4</td><td>5</td><td>6</td></tr></tbody>
          </table>
        </div>
      </article>
    </section>
  </main>

  <div class="scroller" aria-hidden="true">
    <svg width="16" height="13" viewBox="0 0 14 12"><path d="M7 1l6 9q0 1-1 1H2q-1 0-1-1z" fill="#8b8b8b"/></svg>
    <div class="track"><div class="thumb"></div></div>
    <svg width="16" height="13" viewBox="0 0 14 12"><path d="M7 11l6-9q0-1-1-1H2Q1 1 1 2z" fill="#8b8b8b"/></svg>
  </div>
</div>
</body>
</html>
```
FILE: styles.css
```css
* { box-sizing: border-box; }

body {
  margin: 0;
  height: 100vh;
  display: flex;
  flex-direction: column;
  overflow: hidden;
  border-bottom: 2px solid #1f1f23;
  background: #fff;
  color: #212529;
  font-family: "Open Sans", "Noto Sans", sans-serif;
}

h1, h2, h3, h4, p, dl, dd { margin: 0; }
button, input, select { font: inherit; color: inherit; }
button { padding: 0; border: 0; background: none; }
a { color: inherit; text-decoration: none; }
svg { display: block; flex: none; fill: currentColor; }
.sprite { position: absolute; width: 0; height: 0; }

/* Browser window */
.browser { flex: none; background: #1f2129; color: #c8c9ce; font-size: 17px; line-height: 24px; }
.browser button { display: flex; align-items: center; justify-content: center; }

.tabs { display: flex; align-items: center; height: 60px; padding: 1px 26px 0 9px; }
.tab-search { width: 42px; height: 42px; border-radius: 14px; background: #3a3b42; }
.tab { display: flex; align-items: center; }
.tab-active {
  position: relative;
  align-self: flex-end;
  width: 347px;
  height: 51px;
  margin-left: 10px;
  padding: 0 16px 6px 11px;
  border-radius: 14px 14px 0 0;
  background: #3a3b42;
  color: #e6e6e8;
}
.tab-active::before, .tab-active::after { content: ""; position: absolute; bottom: 0; width: 14px; height: 14px; }
.tab-active::before { right: 100%; background: radial-gradient(circle at 0 0, transparent 14px, #3a3b42 14px); }
.tab-active::after { left: 100%; background: radial-gradient(circle at 100% 0, transparent 14px, #3a3b42 14px); }
.fav { width: 24px; height: 24px; margin-right: 12px; }
.fav-globe { fill: #a7abb4; }
.fav-gpt { width: 22px; height: 22px; fill: #e6e6e8; }
.tab-title {
  flex: 1;
  min-width: 0;
  white-space: nowrap;
  -webkit-mask-image: linear-gradient(90deg, #000 calc(100% - 32px), transparent);
  mask-image: linear-gradient(90deg, #000 calc(100% - 32px), transparent);
}
.tab-whole { -webkit-mask-image: none; mask-image: none; }
.tab-close { width: 16px; height: 16px; margin-left: 18px; color: #e3e3e6; }
.tab-song { width: 341px; padding-left: 21px; }
.sound { width: 20px; height: 20px; margin-left: 10px; }
.tab-rule { width: 2px; height: 24px; margin: 0 8px 0 19px; background: #3f4149; }
.tab-chat { width: 328px; padding-left: 10px; }
.new-tab { width: 30px; height: 30px; margin-left: 2px; }
.window-buttons { display: flex; gap: 53px; margin-left: auto; }

.toolbar { display: flex; align-items: center; height: 70px; padding: 0 29px 0 23px; border-radius: 14px 14px 0 0; background: #3a3b42; }
.nav-button { width: 20px; height: 30px; margin-right: 34px; }
.nav-off { color: #76777d; }
.omnibox { flex: 1; display: flex; align-items: center; height: 51px; margin-left: -4px; padding: 0 20px 0 7px; border-radius: 26px; background: #23252c; }
.site-info { width: 36px; height: 36px; border-radius: 18px; background: #3a3b42; }
.url { flex: 1; min-width: 0; margin: 0; padding: 0 0 0 12px; border: 0; background: none; outline: none; font-size: 20px; color: #dcdce0; }
.omni-button { width: 30px; margin-left: 18px; color: #dcdce0; }
.ext { width: 26px; margin: 0 24px 0 29px; }
.bar-rule { flex: none; width: 2px; height: 24px; background: #54565e; }
.music { width: 28px; margin: 0 18px 0 26px; }
.verify { gap: 8px; height: 51px; padding: 0 18px 0 14px; border-radius: 26px; background: #3f4661; color: #e3e6f2; }
.toolbar .dots { width: 6px; margin: 0 0 0 32px; }

.bookmarks { display: flex; align-items: center; height: 52px; padding: 0 21px 10px 19px; border-bottom: 2px solid #48484b; background: #3a3b42; }
.bookmarks .nav-button { width: 22px; margin-right: 22px; }
.mark { display: flex; align-items: center; gap: 9px; margin-left: 22px; }
.mark-two { gap: 12px; margin-left: 29px; }
.two { width: 18px; height: 23px; border-radius: 2px; background: linear-gradient(#f2b705 0 25%, #e4124a 40%, #8f1f8f 60%, #3c7fc4 80%, #5bb85b); color: #fff; font-weight: 700; line-height: 26px; text-align: center; }
.all-rule { margin-left: auto; }
.mark-all { gap: 12px; margin-left: 24px; }

/* Application bar */
.topbar {
  position: relative;
  z-index: 1;
  flex: none;
  display: flex;
  align-items: center;
  height: 81px;
  padding: 0 53px 1px 45px;
  background: linear-gradient(135deg, #3e59a4, #2c3c80);
  box-shadow: 0 4px 24px rgba(0, 0, 0, 0.1);
  color: #fff;
}
.brand { margin-left: 33px; font-size: 25px; font-weight: 600; line-height: 32px; }
.alerts { position: relative; display: flex; margin-left: auto; padding: 8px 0; }
.alert-glyph { width: 15px; height: 20px; border: 2px solid #c9ae2b; }
.alert-count { position: absolute; left: 9px; bottom: 22px; padding: 0 8px; border-radius: 15px; background: #e04049; font-size: 17px; font-weight: 700; line-height: 29px; }
.account { display: flex; align-items: center; margin-left: 68px; font-size: 22px; font-weight: 500; }
.account-badge { width: 44px; height: 44px; margin-right: 15px; border-radius: 22px; background: #cbb02b; font-size: 18px; font-weight: 700; line-height: 44px; }
.account svg { margin-left: 17px; }

/* Sidebar */
.shell { flex: 1; min-height: 0; display: flex; background: #fff; }
.sidebar { flex: none; display: flex; flex-direction: column; width: 389px; border-right: 1px solid #e2e4ea; }
.menu { display: flex; flex-direction: column; gap: 5px; padding-top: 32px; }
.menu-item { display: flex; align-items: center; height: 67px; padding: 0 30px 1px 26px; color: #3a4255; font-size: 19px; font-weight: 600; text-align: left; }
.menu-group { height: 66px; }
.menu-current { border-right: 4px solid #3b57a4; background: #e8eefa; color: #2d3f86; }
.menu-icon { width: 29px; height: 22px; margin-right: 15px; }
.menu-more { width: 10px; height: 14px; margin-left: auto; }
.json-tools { display: flex; gap: 6px; margin: auto 10px 0 0; padding: 8px 8px 6px; border-top: 1px solid #f3f4f6; }
.json-button { flex: 1; display: flex; align-items: center; justify-content: center; gap: 4px; height: 36px; border: 1px solid #f1f2f5; border-radius: 4px; background: #fcfdff; color: #a3a8b3; font-size: 16px; }
.json-button svg { fill: #bfc1c8; }

/* Page */
.main { flex: 1; min-width: 0; overflow: hidden; padding: 32px 32px 0; }
.welcome { padding-bottom: 18px; border-bottom: 1px solid #e4e5e9; }
.welcome-title { color: #111629; font-size: 38px; font-weight: 800; line-height: 44px; }
.welcome-date { margin-top: 6px; color: #6b7690; font-size: 18px; line-height: 26px; }

.card { overflow: hidden; border: 1px solid #e6e7ea; border-radius: 22px; background: #fff; box-shadow: 0 8px 32px rgba(0, 0, 0, 0.06); }
.stats { display: grid; grid-template-columns: repeat(5, 1fr); gap: 22px; margin-top: 33px; }
.stat { padding: 16px; border-radius: 16px; }
.stat-head { display: flex; gap: 27px; }
.stat-head h3 { color: #111629; font-size: 18px; font-weight: 600; line-height: 26px; }
.stat-icon { display: flex; align-items: center; justify-content: center; width: 65px; height: 65px; border-radius: 16px; color: #fff; }
.stat-icon svg { width: 35px; height: 28px; }
.violet { background: #6e5ff5; }
.blue { background: #4fa3ea; }
.orange { background: #ec9338; }
.green { background: #48bb7e; }
.stat-number { margin-top: 65px; color: #111629; font-size: 56px; font-weight: 800; line-height: 64px; }
.profile { padding: 16px 33px 16px; }
.profile-avatar { width: 108px; height: 108px; margin: 0 auto; border-radius: 16px; background: #e5e7eb; color: #31428c; font-size: 32px; font-weight: 700; line-height: 110px; text-align: center; }
.profile-name { margin-top: 15px; font-size: 24px; font-weight: 800; line-height: 32px; }
.profile-mail { margin-top: 3px; color: #6b7690; font-size: 18px; font-weight: 500; line-height: 26px; }
.profile-switch { display: flex; align-items: center; gap: 13px; margin-top: 6px; color: #6b7690; font-size: 17px; font-weight: 500; }
.profile-switch select { flex: 1; min-width: 0; height: 49px; padding: 0 4px 0 17px; border: 1px solid #e4e5e9; border-radius: 12px; background: #fff; color: #111629; font-size: 18px; font-weight: 400; }

.overviews { display: grid; grid-template-columns: repeat(4, 1fr); gap: 28px; margin-top: 33px; }
.card-head { display: flex; align-items: center; height: 75px; padding: 0 27px 2px; gap: 12px; border-bottom: 1px solid #e4e5e9; background: linear-gradient(135deg, #f9fafc, #fff); color: #111629; font-size: 22px; font-weight: 600; line-height: 30px; }
.card-head svg { height: 22px; }
.w-sign { width: 26px; }
.w-narrow { width: 18px; }
.w-square { width: 23px; }
.w-cal { width: 20px; }
.card-body { padding: 22px 27px 21px; }
.figures { display: grid; gap: 17px; }
.figure, .view-link { display: flex; align-items: center; justify-content: space-between; padding: 0 19px; border: 1px solid #e6e7ea; border-radius: 16px; background: linear-gradient(135deg, #fff, #f8f9fc); }
.figure { height: 66px; }
.figure dt { color: #6b7690; font-size: 18px; font-weight: 500; }
.figure dd { font-size: 21px; font-weight: 800; }
.figure .good { color: #33a852; }
.figure .bad { color: #e04049; }
.view-link { height: 56px; margin-top: 27px; border-radius: 14px; color: #111629; font-size: 18px; font-weight: 600; }

.panels { display: grid; grid-template-columns: 5fr 9fr 6fr; gap: 28px; margin-top: 54px; }
.panels .card { min-height: 420px; border-radius: 24px; }
.notices { display: grid; gap: 17px; }
.notice { display: flex; height: 76px; overflow: hidden; border: 1px solid #e6e7ea; border-radius: 16px; background: linear-gradient(135deg, #fff, #f8f9fc); }
.notice-short { height: 55px; }
.notice-icon { flex: none; display: flex; align-items: center; justify-content: center; width: 54px; height: 54px; border-radius: 16px; background: linear-gradient(135deg, #eef0ff, #e0e4ff); box-shadow: 0 4px 12px rgba(0, 0, 0, 0.06); color: #5a3be8; }
.notice-icon svg { width: 22px; height: 22px; }
.notice-text { flex: 1; min-width: 0; padding: 0 8px 0 19px; }
.notice-text h4 { padding-top: 2px; color: #111629; font-size: 20px; font-weight: 700; line-height: 26px; }
.notice-text p { margin-top: 8px; color: #6b7690; font-size: 18px; line-height: 26px; }
.notice-tag { flex: none; height: 41px; padding: 0 16px; border: 1px solid #e2e7f0; border-radius: 20px; background: #f2f5fa; font-size: 15px; font-weight: 700; letter-spacing: 1px; line-height: 39px; }

.calendar { padding-top: 28px; }
.month { display: flex; align-items: center; justify-content: space-between; }
.month h4 { color: #111629; font-size: 24px; font-weight: 800; }
.month-button { display: flex; align-items: center; justify-content: center; width: 49px; height: 48px; border: 1px solid #e6e7ea; border-radius: 10px; color: #6b7690; }
.days { width: calc(100% + 10px); margin: 16px -5px 0; border-spacing: 5px 0; table-layout: fixed; text-align: center; }
.days th, .days td { height: 67px; padding: 0; }
.days th { color: #6b7690; font-size: 16px; font-weight: 600; }
.days td { color: #111629; font-size: 19px; font-weight: 500; }

/* Scroll bar */
.scroller { flex: none; display: flex; flex-direction: column; align-items: center; width: 22px; padding: 6px 0 6px 2px; background: #fcfcfc; }
.track { flex: 1; display: grid; grid-template-rows: 31fr 9fr; width: 13px; padding: 8px 0; }
.thumb { border-radius: 7px; background: #8b8b8b; }
```
